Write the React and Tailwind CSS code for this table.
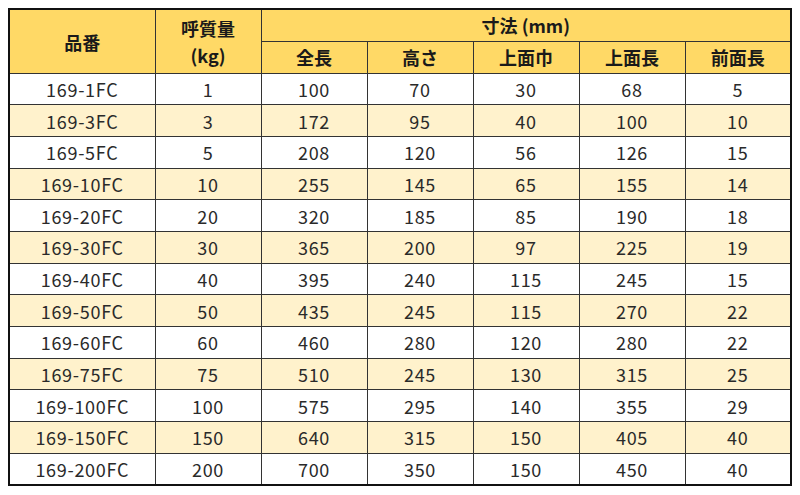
const rows = [
  ['169-1FC', '1', '100', '70', '30', '68', '5'],
  ['169-3FC', '3', '172', '95', '40', '100', '10'],
  ['169-5FC', '5', '208', '120', '56', '126', '15'],
  ['169-10FC', '10', '255', '145', '65', '155', '14'],
  ['169-20FC', '20', '320', '185', '85', '190', '18'],
  ['169-30FC', '30', '365', '200', '97', '225', '19'],
  ['169-40FC', '40', '395', '240', '115', '245', '15'],
  ['169-50FC', '50', '435', '245', '115', '270', '22'],
  ['169-60FC', '60', '460', '280', '120', '280', '22'],
  ['169-75FC', '75', '510', '245', '130', '315', '25'],
  ['169-100FC', '100', '575', '295', '140', '355', '29'],
  ['169-150FC', '150', '640', '315', '150', '405', '40'],
  ['169-200FC', '200', '700', '350', '150', '450', '40'],
]

const subHeads = ['全長', '高さ', '上面巾', '上面長', '前面長']

function App() {
  return (
    <div className="w-[800px] h-[495px] bg-white pt-[8px] pl-[8px] font-['Noto_Sans_CJK_JP',sans-serif] text-[#2a2a2a]">
      <table className="w-[782px] border-collapse border-2 border-[#111] table-fixed text-center">
        <colgroup>
          <col className="w-[146px]" />
          <col className="w-[106px]" />
          <col className="w-[106px]" />
          <col className="w-[106px]" />
          <col className="w-[106px]" />
          <col className="w-[106px]" />
          <col className="w-[106px]" />
        </colgroup>
        <thead className="bg-[#FFD966] font-bold text-[18px] text-[#1a1a1a]">
          <tr className="h-[32px]">
            <th rowSpan={2} className="border border-[#333] pt-[2px]">品番</th>
            <th className="border-x border-[#333] leading-none pt-[4px]">呼質量</th>
            <th colSpan={5} className="border border-[#333]">寸法 (mm)</th>
          </tr>
          <tr className="h-[32px]">
            <th className="border-x border-b border-[#333] leading-none pb-[4px]">(kg)</th>
            {subHeads.map((h) => (
              <th key={h} className="border border-[#333]">{h}</th>
            ))}
          </tr>
        </thead>
        <tbody className="text-[18px] tracking-[0.7px]">
          {rows.map((r, i) => (
            <tr key={r[0]} className={`h-[31.7px] ${i % 2 ? 'bg-[#FFF2CC]' : 'bg-white'}`}>
              {r.map((c, j) => (
                <td key={j} className="border border-[#333] p-0 leading-none">{c}</td>
              ))}
            </tr>
          ))}
        </tbody>
      </table>
    </div>
  )
}

export default App
